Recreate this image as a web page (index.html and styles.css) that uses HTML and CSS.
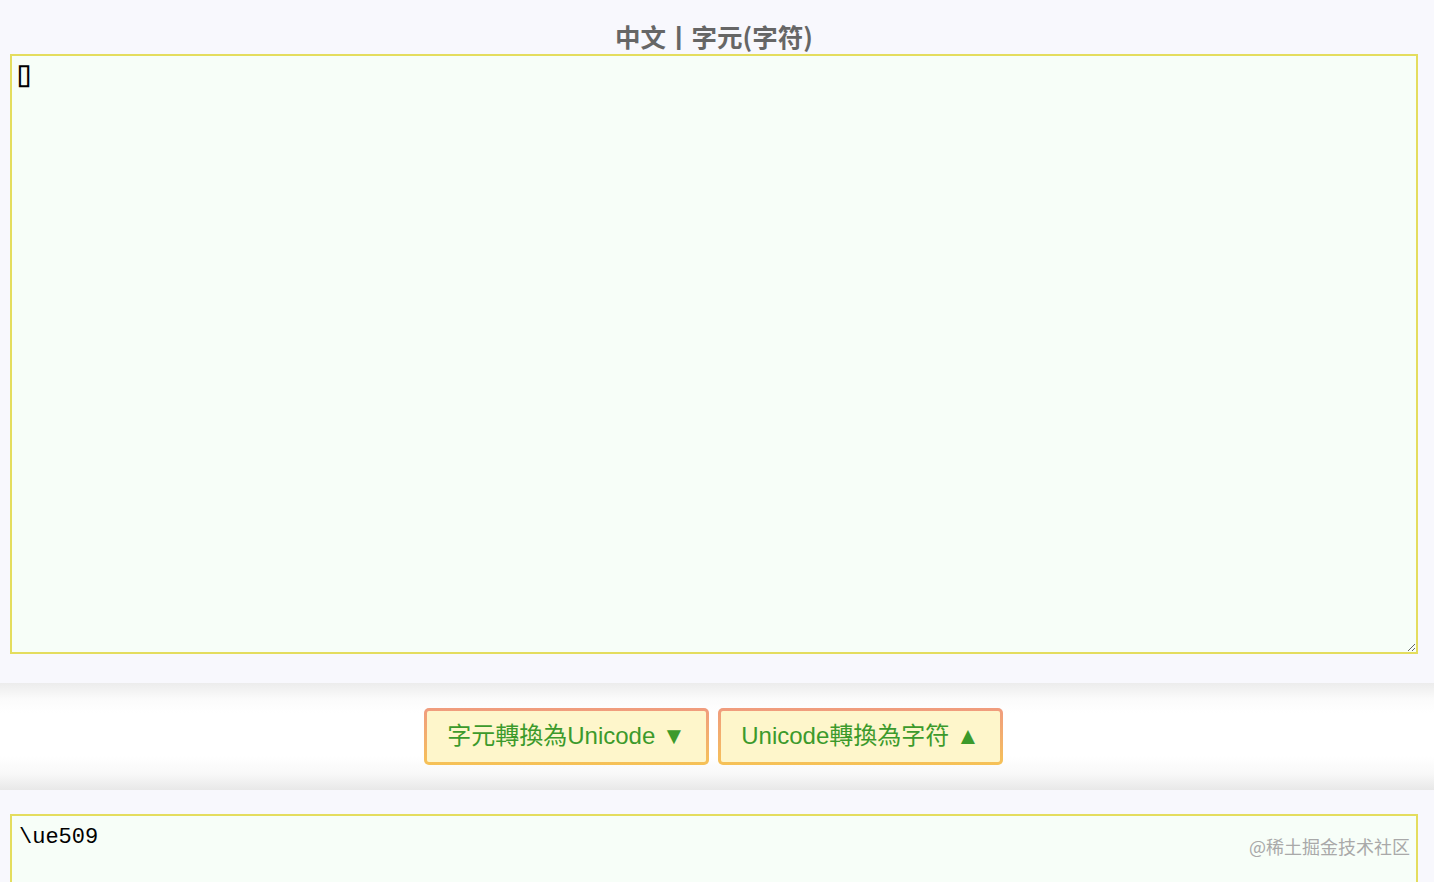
FILE: index.html
```html
<!DOCTYPE html>
<html lang="zh-Hant">
<head>
<meta charset="utf-8">
<title>Unicode</title>
<link rel="stylesheet" href="styles.css">
</head>
<body>
<section class="panel top">
  <h2 class="title">中文丨字元(字符)</h2>
  <textarea class="box box-top" spellcheck="false">▯</textarea>
</section>
<section class="actions">
  <button class="btn" type="button">字元轉換為Unicode ▼</button>
  <button class="btn" type="button">Unicode轉換為字符 ▲</button>
</section>
<section class="panel bottom">
  <textarea class="box box-bottom" spellcheck="false">\ue509</textarea>
  <span class="watermark">@稀土掘金技术社区</span>
</section>
</body>
</html>
```
FILE: styles.css
```css
html, body {
  margin: 0;
  padding: 0;
  background: #ffffff;
  overflow: hidden;
}
body {
  font-family: "Liberation Sans", "Noto Sans CJK TC", sans-serif;
}
.panel {
  background: #f8f8fd;
  padding: 0 16px 0 10px;
}
.top {
  padding-top: 18px;
  padding-bottom: 29px;
}
.title {
  margin: 0;
  height: 36px;
  line-height: 36px;
  text-align: center;
  font-family: "Noto Sans CJK TC", "Noto Sans CJK SC", sans-serif;
  font-weight: 700;
  font-size: 25.5px;
  color: #666666;
}
.box {
  display: block;
  box-sizing: border-box;
  width: 100%;
  margin: 0;
  border: 2px solid #e4dd5e;
  background: #f7fef8;
  padding: 8px 7px;
  font-family: "Liberation Mono", "DejaVu Sans Mono", monospace;
  font-size: 22px;
  line-height: 28px;
  color: #000;
  outline: none;
  border-radius: 0;
}
.box-top {
  height: 600px;
  resize: vertical;
  font-family: "DejaVu Sans Mono", monospace;
  font-size: 37px;
  line-height: 30px;
  padding: 3px 7px 8px 1px;
}
.actions {
  height: 107px;
  display: flex;
  justify-content: center;
  align-items: center;
  gap: 9px;
  padding-right: 7px;
  background: linear-gradient(to bottom, #ececec 0, #fbfbfb 16px, #ffffff 30px, #ffffff calc(100% - 34px), #f8f8f8 calc(100% - 16px), #e8e8e8 100%);
}
.btn {
  box-sizing: border-box;
  width: 285px;
  height: 57px;
  border: 3px solid transparent;
  border-radius: 5px;
  background:
    linear-gradient(#fef6cb, #fef6cb) padding-box,
    linear-gradient(to bottom, #f09c7e, #f3b26a 60%, #f6c256) border-box;
  color: #3c9a2b;
  font-family: "Liberation Sans", "Noto Sans CJK TC", sans-serif;
  font-size: 24px;
  padding: 0 0 6px 0;
  cursor: pointer;
}
.bottom {
  position: relative;
  padding-top: 24px;
  height: 200px;
}
.box-bottom {
  height: 200px;
  resize: vertical;
}
.watermark {
  position: absolute;
  right: 24px;
  top: 43px;
  font-family: "Noto Sans CJK SC", sans-serif;
  font-size: 18px;
  color: #a9a9a9;
}
```
